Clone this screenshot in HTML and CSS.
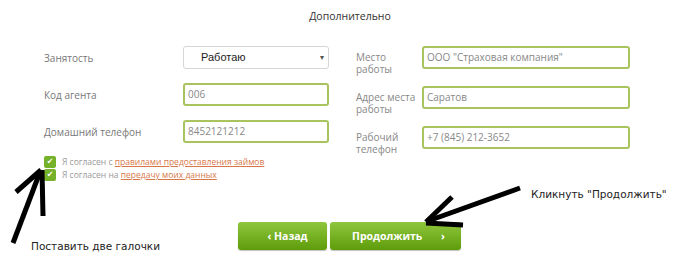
FILE: index.html
```html
<!DOCTYPE html>
<html lang="ru">
<head>
    <meta charset="UTF-8">
    <title>Дополнительно</title>
    <link rel="stylesheet" href="styles.css">
</head>
<body>
    <div class="page">
        <h3 class="title">Дополнительно</h3>

        <div class="form">
            <div class="col col-left">
                <div class="row">
                    <label>Занятость</label>
                    <div class="select">Работаю<span class="caret">▾</span></div>
                </div>
                <div class="row">
                    <label>Код агента</label>
                    <div class="input">006</div>
                </div>
                <div class="row">
                    <label>Домашний телефон</label>
                    <div class="input">8452121212</div>
                </div>
            </div>

            <div class="col col-right">
                <div class="row">
                    <label>Место<br>работы</label>
                    <div class="input">ООО "Страховая компания"</div>
                </div>
                <div class="row">
                    <label>Адрес места<br>работы</label>
                    <div class="input">Саратов</div>
                </div>
                <div class="row">
                    <label>Рабочий<br>телефон</label>
                    <div class="input">+7 (845) 212-3652</div>
                </div>
            </div>
        </div>

        <div class="agree">
            <div class="check-row"><span class="check">✔</span>Я согласен с&nbsp;<a href="#">правилами предоставления займов</a></div>
            <div class="check-row"><span class="check">✔</span>Я согласен на&nbsp;<a href="#">передачу моих данных</a></div>
        </div>

        <div class="buttons">
            <button class="btn btn-back">‹ Назад</button>
            <button class="btn btn-next">Продолжить <span class="arr">›</span></button>
        </div>

        <!-- пометки поверх скриншота -->
        <div class="note note-left">Поставить две галочки</div>
        <div class="note note-right">Кликнуть "Продолжить"</div>
        <svg class="arrows" width="700" height="276" viewBox="0 0 700 276">
            <g stroke="#000" stroke-width="5" stroke-linecap="butt" fill="none">
                <line x1="13" y1="243" x2="40" y2="172"/>
                <line x1="41" y1="170" x2="16" y2="192"/>
                <line x1="42" y1="170" x2="43" y2="216"/>
                <line x1="520" y1="188" x2="428" y2="221"/>
                <line x1="426" y1="222" x2="452" y2="197"/>
                <line x1="426" y1="223" x2="463" y2="225"/>
            </g>
        </svg>
    </div>
</body>
</html>
```

FILE: styles.css
```css
* {
    margin: 0;
    padding: 0;
    box-sizing: border-box;
}

body {
    background: #fff;
    font-family: 'Open Sans', 'Liberation Sans', sans-serif;
}

.page {
    position: relative;
    width: 700px;
    height: 276px;
    overflow: hidden;
}

.title {
    text-align: center;
    font-weight: normal;
    font-size: 10.5px;
    color: #333;
    padding-top: 9px;
    height: 46px;
}

.form {
    display: flex;
    padding-left: 44px;
}

.col {
    display: flex;
    flex-direction: column;
}

.col-left {
    gap: 14px;
    width: 312px;
}

.col-right {
    gap: 17px;
}

.row {
    display: flex;
    align-items: center;
    height: 23px;
}

.col-left label {
    width: 139px;
    font-size: 10px;
    color: #777;
}

.col-right .row {
    align-items: flex-start;
}

.col-right label {
    width: 66px;
    padding-top: 5px;
    font-size: 10px;
    line-height: 12px;
    color: #888;
    white-space: nowrap;
}

.input {
    height: 23px;
    border: 2px solid #a9c35e;
    border-radius: 3px;
    font-size: 10px;
    line-height: 19px;
    color: #888;
    padding-left: 3px;
}

.col-left .input,
.select {
    width: 146px;
}

.col-right .input {
    width: 208px;
}

.select {
    position: relative;
    height: 23px;
    border: 1px solid #d6d6d6;
    border-radius: 3px;
    font-family: 'Liberation Sans', sans-serif;
    font-size: 11px;
    line-height: 21px;
    color: #222;
    padding-left: 17px;
}

.caret {
    position: absolute;
    right: 4px;
    top: 0;
    font-size: 8px;
    color: #555;
}

.agree {
    padding: 6px 0 0 44px;
}

.check-row {
    display: flex;
    align-items: center;
    height: 13px;
    font-size: 8.5px;
    color: #999;
}

.check {
    display: inline-block;
    width: 12px;
    height: 12px;
    margin-right: 6px;
    background: #76b12a;
    border-radius: 2px;
    color: #fff;
    font-family: 'DejaVu Sans', sans-serif;
    font-size: 8px;
    line-height: 12px;
    text-align: center;
}

.check-row a {
    color: #d8784a;
}

.buttons {
    display: flex;
    justify-content: center;
    gap: 3px;
    padding-top: 41px;
    padding-right: 1px;
}

.btn {
    height: 28px;
    border: none;
    border-radius: 3px;
    background: linear-gradient(#8fc63c, #5e9c0b);
    box-shadow: 0 1px 1px rgba(0, 0, 0, 0.25);
    color: #fff;
    font-family: 'Open Sans', sans-serif;
    font-weight: bold;
    font-size: 10.5px;
}

.btn-back {
    width: 89px;
    padding-left: 10px;
}

.btn-next {
    width: 131px;
    padding-left: 6px;
}

.arr {
    margin-left: 16px;
}

.note {
    position: absolute;
    font-family: 'DejaVu Sans', Verdana, sans-serif;
    font-size: 10.5px;
    color: #222;
}

.note-left {
    left: 31px;
    top: 240px;
}

.note-right {
    left: 531px;
    top: 188px;
}

.arrows {
    position: absolute;
    left: 0;
    top: 0;
}
```
